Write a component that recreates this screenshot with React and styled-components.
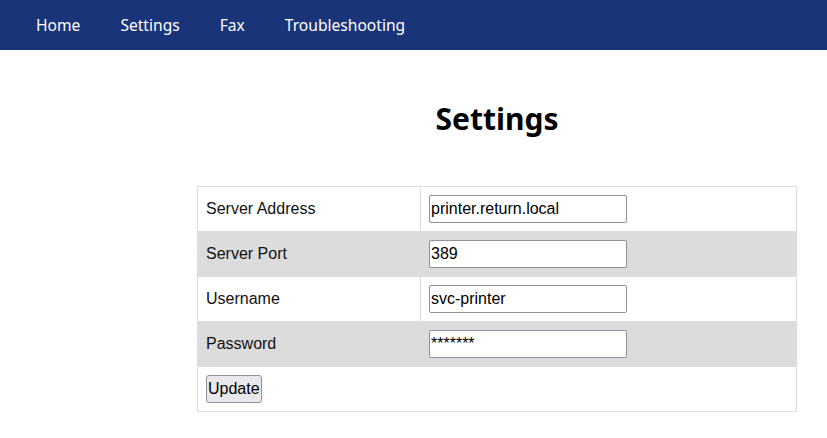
import React from 'react'
import styled, { createGlobalStyle } from 'styled-components'

const GlobalStyle = createGlobalStyle`
  body {
    margin: 0;
    background: #fff;
    font-family: "Liberation Sans", Arial, sans-serif;
  }
`

const NavBar = styled.nav`
  display: flex;
  align-items: center;
  height: 50px;
  padding: 0 16px;
  background: #1a347a;
`

const NavLink = styled.a`
  padding: 0 20px;
  color: #fff;
  font-family: "Noto Sans", sans-serif;
  font-size: 15.6px;
  text-decoration: none;
  line-height: 48px;
  cursor: pointer;
`

const Main = styled.main`
  margin-left: 167px;
  padding-top: 48px;
`

const Title = styled.h1`
  margin: 0 0 46px;
  text-align: center;
  font-family: "Noto Sans", sans-serif;
  font-size: 30px;
  font-weight: 700;
  line-height: 42px;
  color: #000;
`

const Table = styled.table`
  width: 600px;
  margin: 0 auto;
  border-collapse: collapse;
  border: 1px solid #ddd;
`

const Row = styled.tr`
  background: ${p => (p.$shaded ? '#dcdcdc' : '#fff')};
`

const Cell = styled.td`
  padding: 8px;
  border: 1px solid #ddd;
  border-color: ${p => (p.$shaded ? '#dcdcdc' : '#ddd')};
  font-size: 16px;
  color: #111;
  width: ${p => p.$w || 'auto'};
`

const Input = styled.input`
  box-sizing: border-box;
  width: 198px;
  height: 28px;
  padding: 0 1px;
  border: 1px solid #8f8f9d;
  border-radius: 2px;
  font-family: "Liberation Sans", Arial, sans-serif;
  font-size: 16px;
  color: #000;
  display: block;
`

const Button = styled.button`
  height: 28px;
  padding: 0 1px;
  background: #e9e9ed;
  border: 1px solid #8f8f9d;
  border-radius: 3px;
  font-family: "Liberation Sans", Arial, sans-serif;
  font-size: 16px;
  color: #000;
`

const fields = [
  { label: 'Server Address', value: 'printer.return.local' },
  { label: 'Server Port', value: '389' },
  { label: 'Username', value: 'svc-printer' },
  { label: 'Password', value: '*******' },
]

export default function App() {
  return (
    <>
      <GlobalStyle />
      <NavBar>
        <NavLink>Home</NavLink>
        <NavLink>Settings</NavLink>
        <NavLink>Fax</NavLink>
        <NavLink>Troubleshooting</NavLink>
      </NavBar>
      <Main>
        <Title>Settings</Title>
        <Table>
          <tbody>
            {fields.map((f, i) => (
              <Row key={f.label} $shaded={i % 2 === 1}>
                <Cell $shaded={i % 2 === 1} $w="206px">{f.label}</Cell>
                <Cell $shaded={i % 2 === 1}>
                  <Input defaultValue={f.value} />
                </Cell>
              </Row>
            ))}
            <Row>
              <Cell colSpan={2}>
                <Button>Update</Button>
              </Cell>
            </Row>
          </tbody>
        </Table>
      </Main>
    </>
  )
}
